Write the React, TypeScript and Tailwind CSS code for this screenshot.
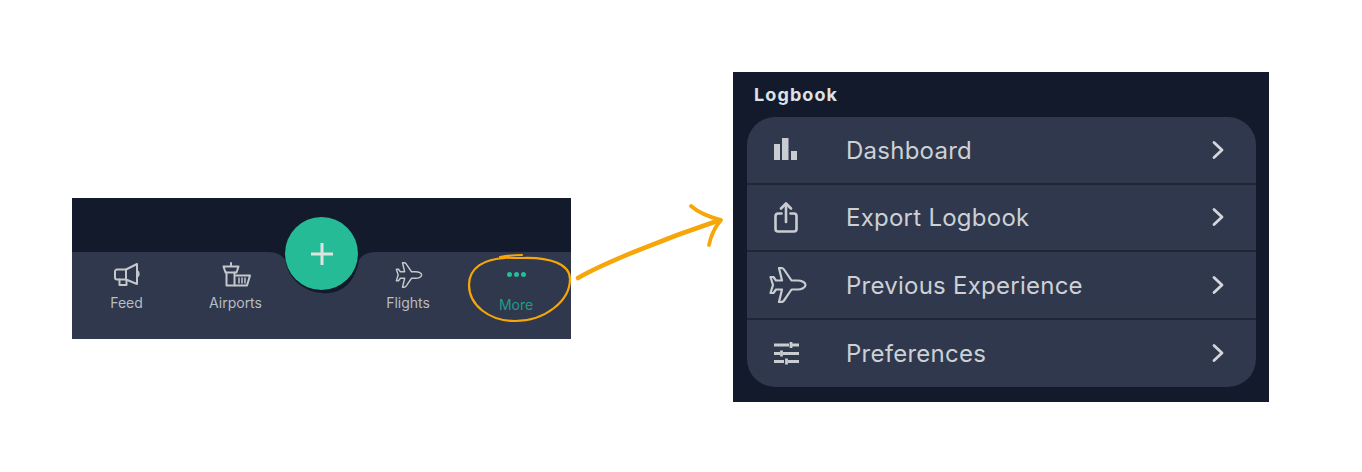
const FONT = "font-['Inter',sans-serif]";

function Megaphone() {
  return (
    <svg width="28" height="25" viewBox="0 0 28 25" fill="none" stroke="#c4c7cc" strokeWidth="2" strokeLinejoin="round" strokeLinecap="round">
      <path d="M3 7.500h9l11-5.500v20l-11-4.500H3a2 2 0 0 1-2-2v-6a2 2 0 0 1 2-2z" />
      <path d="M12 7.500v10" />
      <path d="M23 9c2 .5 2.500 5 0 6" />
      <path d="M5.500 17.500v5.500h7v-5" />
    </svg>
  );
}

function Tower() {
  return (
    <svg width="29" height="25" viewBox="0 0 29 25" fill="none" stroke="#c4c7cc" strokeWidth="2" strokeLinejoin="round" strokeLinecap="round">
      <path d="M9 1v3" />
      <path d="M1.500 4.500h15l-2 6h-11z" />
      <path d="M4.500 10.500v13h8v-13" />
      <path d="M14 13.500h14l-3 10h-12" />
      <path d="M17 16v5M20 16v5M23 16v5" strokeWidth="1.500" />
    </svg>
  );
}

function Plane({ className, width = 2 }: { className: string; width?: number }) {
  return (
    <svg className={className} viewBox="0 0 38 36" fill="none" stroke="currentColor" strokeWidth={width} strokeLinejoin="round" strokeLinecap="round">
      <path d="M36.500 18c0-2.500-4-4.500-8-4.500h-6L15 2.500c-.7-1-1.700-1.500-3-1.500h-2l3 12.500H7L4.500 10H1.500L4 18 1.500 26h3L7 22.500h6L10 35h2c1.300 0 2.300-.5 3-1.500l7.500-11h6c4 0 8-2 8-4.500z" />
    </svg>
  );
}

function BarsIcon() {
  return (
    <svg width="24" height="23" viewBox="0 0 24 23" fill="#c9ccd1">
      <rect x="1" y="6" width="6" height="16" />
      <rect x="9" y="0" width="6.500" height="22" />
      <rect x="18" y="13" width="6" height="9" />
    </svg>
  );
}

function ShareIcon() {
  return (
    <svg width="24" height="31" viewBox="0 0 24 31" fill="none" stroke="#c9ccd1" strokeWidth="2.600" strokeLinecap="round" strokeLinejoin="round">
      <path d="M12 20V2" />
      <path d="M7 6.500 12 1.500l5 5" />
      <path d="M7.500 11.500H4A2.500 2.500 0 0 0 1.500 14v13A2.500 2.500 0 0 0 4 29.500h16a2.500 2.500 0 0 0 2.500-2.500V14a2.500 2.500 0 0 0-2.500-2.500h-3.500" />
    </svg>
  );
}

function SlidersIcon() {
  return (
    <svg width="27" height="24" viewBox="0 0 27 24" fill="none" stroke="#c9ccd1" strokeWidth="2.800">
      <path d="M1 4h15M19 4h7M18 1v6" />
      <path d="M1 12.500h6M10 12.500h16M8.500 9.500v6" />
      <path d="M1 20.500h10M15 20.500h11M13.500 17.500v6" />
    </svg>
  );
}

function Chevron() {
  return (
    <svg width="14" height="20" viewBox="0 0 14 20" fill="none" stroke="#d4d6da" strokeWidth="2.800" strokeLinecap="round" strokeLinejoin="round">
      <path d="M3 2.500 11 10l-8 7.500" />
    </svg>
  );
}

const TABS = [
  { label: "Feed", icon: <Megaphone />, shift: "pl-[3px]" },
  { label: "Airports", icon: <Tower />, shift: "pl-[2px]" },
];

const ROWS = [
  { label: "Dashboard", icon: <BarsIcon />, pad: "pl-[4px]" },
  { label: "Export Logbook", icon: <ShareIcon />, pad: "pl-[5px]" },
  { label: "Previous Experience", icon: <Plane className="w-[38px] h-[36px] text-[#c9ccd1]" width={2.200} />, pad: "pl-0" },
  { label: "Preferences", icon: <SlidersIcon />, pad: "pl-[4px]" },
];

export default function App() {
  return (
    <div className={`relative h-[472px] w-[1362px] overflow-hidden bg-white flex items-start ${FONT}`}>
      {/* Tab bar */}
      <div className="relative ml-[72px] mt-[198px] w-[499px] h-[141px] bg-[#131a2b] flex flex-col justify-end">
        <div className="h-[87px] bg-[#2f384c] flex pt-[10px]">
          {TABS.map((t) => (
            <div key={t.label} className="w-[109px] flex flex-col items-center">
              <div className={`h-[32px] ${t.shift}`}>{t.icon}</div>
              <span className="text-[14px] leading-[18px] text-[#b9bcc3]">{t.label}</span>
            </div>
          ))}
          <div className="w-[64px]" />
          <div className="w-[108px] flex flex-col items-center">
            <div className="h-[32px] pl-[2px]">
              <Plane className="w-[28px] h-[26px] text-[#c4c7cc]" />
            </div>
            <span className="text-[14px] leading-[18px] text-[#b9bcc3]">Flights</span>
          </div>
          <div className="flex-1 flex flex-col items-center pr-[1px]">
            <div className="h-[34px] flex items-start pt-[10px] gap-[2px]">
              <span className="w-[5px] h-[5px] rounded-full bg-[#27bc98]" />
              <span className="w-[5px] h-[5px] rounded-full bg-[#27bc98]" />
              <span className="w-[5px] h-[5px] rounded-full bg-[#27bc98]" />
            </div>
            <span className="text-[14px] leading-[18px] text-[#1f9c89]">More</span>
          </div>
        </div>

        {/* Notch behind the add button */}
        <svg className="absolute left-[190px] top-[50px]" width="120" height="50" viewBox="0 0 120 50" fill="#131a2b">
          <path d="M0 4h6c8 0 13 2 17 8 0 0 4 30 37 33s37-33 37-33c4-6 9-8 17-8h6V0H0z" />
        </svg>
        <div className="absolute left-[213px] top-[19px] w-[73px] h-[73px] rounded-full bg-[#25bb97] flex items-center justify-center">
          <svg width="24" height="24" viewBox="0 0 24 24" stroke="#dfe3e0" strokeWidth="3">
            <path d="M12 1v22M1 12h22" />
          </svg>
        </div>
      </div>

      {/* Logbook menu */}
      <div className="ml-[162px] mt-[72px] w-[536px] h-[330px] bg-[#131a2b] pl-[14px] pr-[13px]">
        <h2 className="pl-[7px] pt-[12px] h-[45px] text-[18px] leading-[22px] font-bold tracking-[1.100px] text-[#dfe1e4]">Logbook</h2>
        <div className="rounded-[28px] bg-[#2f384c] divide-y-2 divide-[#1f2637]">
          {ROWS.map((row) => (
            <div key={row.label} className="h-[67.500px] flex items-center">
              <div className="w-[99px] pl-[22px]">
                <div className={`flex ${row.pad}`}>{row.icon}</div>
              </div>
              <span className="flex-1 pt-[2px] text-[24px] tracking-[0.25px] text-[#cdd0d5]">{row.label}</span>
              <div className="pr-[31px]">
                <Chevron />
              </div>
            </div>
          ))}
        </div>
      </div>

      {/* Hand-drawn annotation */}
      <svg className="absolute left-0 top-0 pointer-events-none" width="1362" height="472" fill="none" stroke="#f6a609" strokeLinecap="round" strokeLinejoin="round">
        <path d="M505 258c-20 1-36 9-36 27 0 20 20 36 46 36 30 0 55-20 55-42 0-15-20-22-48-21-8 0-17 0-22-1 6-1 14-2 22-2" strokeWidth="2.200" />
        <path d="M578 278c22-13 82-38 142-58" strokeWidth="4.500" />
        <path d="M691 206c8 7 18 11 30 14-6 7-10 15-12 25" strokeWidth="3.800" />
      </svg>
    </div>
  );
}
